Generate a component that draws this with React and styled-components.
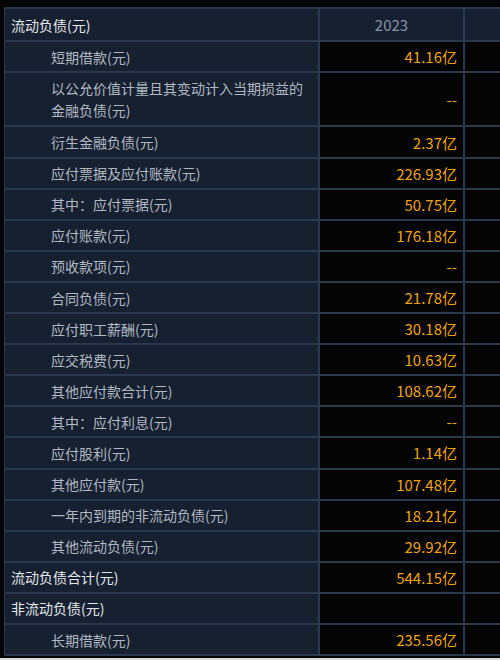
import React from 'react'
import styled, { createGlobalStyle } from 'styled-components'

const GlobalStyle = createGlobalStyle`
    html, body {
        margin: 0;
        padding: 0;
        background: #dcdcdc;
    }
    body {
        font-family: "Noto Sans CJK SC", "Noto Sans", sans-serif;
    }
`

const rows = [
    { name: '短期借款(元)', value: '41.16亿', level: 1 },
    { name: '以公允价值计量且其变动计入当期损益的金融负债(元)', value: '--', level: 1, tall: true },
    { name: '衍生金融负债(元)', value: '2.37亿', level: 1 },
    { name: '应付票据及应付账款(元)', value: '226.93亿', level: 1 },
    { name: '其中：应付票据(元)', value: '50.75亿', level: 1 },
    { name: '应付账款(元)', value: '176.18亿', level: 1 },
    { name: '预收款项(元)', value: '--', level: 1 },
    { name: '合同负债(元)', value: '21.78亿', level: 1 },
    { name: '应付职工薪酬(元)', value: '30.18亿', level: 1 },
    { name: '应交税费(元)', value: '10.63亿', level: 1 },
    { name: '其他应付款合计(元)', value: '108.62亿', level: 1 },
    { name: '其中：应付利息(元)', value: '--', level: 1 },
    { name: '应付股利(元)', value: '1.14亿', level: 1 },
    { name: '其他应付款(元)', value: '107.48亿', level: 1 },
    { name: '一年内到期的非流动负债(元)', value: '18.21亿', level: 1 },
    { name: '其他流动负债(元)', value: '29.92亿', level: 1 },
    { name: '流动负债合计(元)', value: '544.15亿', level: 0 },
    { name: '非流动负债(元)', value: '', level: 0 },
    { name: '长期借款(元)', value: '235.56亿', level: 1 },
]

export default function App() {
    return (
        <>
            <GlobalStyle />
            <Frame>
                <Grid>
                    <HeadLabel>流动负债(元)</HeadLabel>
                    <YearCell>2023</YearCell>
                    <HeadFill />
                    {rows.map((r, i) => (
                        <React.Fragment key={i}>
                            <Label level={r.level} tall={r.tall}>{r.name}</Label>
                            <Value tall={r.tall}>{r.value}</Value>
                            <Fill tall={r.tall} />
                        </React.Fragment>
                    ))}
                </Grid>
            </Frame>
        </>
    )
}

const Frame = styled.div`
    width: 500px;
    height: 658px;
    background: #050505;
    padding: 7px 0 0 4px;
    box-sizing: border-box;
    overflow: hidden;
`

const Grid = styled.div`
    display: grid;
    grid-template-columns: 313px 143px 1fr;
    column-gap: 2px;
    row-gap: 2px;
    padding: 2px 0 2px 1px;
    background: #2b394d;
    font-size: 14px;
`

const HeadLabel = styled.div`
    height: 31px;
    background: #172030;
    color: #e4e7ec;
    display: flex;
    align-items: center;
    padding-left: 6px;
`

const YearCell = styled.div`
    height: 31px;
    background: #172030;
    color: #8694aa;
    font-size: 15px;
    display: flex;
    align-items: center;
    justify-content: center;
`

const HeadFill = styled.div`
    background: #172030;
`

const Label = styled.div`
    height: ${({ tall }) => (tall ? '52.4px' : '29.1px')};
    background: #172030;
    color: ${({ level }) => (level === 0 ? '#e4e7ec' : '#b1b8c4')};
    display: flex;
    align-items: center;
    padding: 0 10px 0 ${({ level }) => (level === 0 ? '6px' : '46px')};
    line-height: 22px;
`

const Value = styled.div`
    height: ${({ tall }) => (tall ? '52.4px' : '29.1px')};
    background: #040404;
    color: #eea312;
    font-size: 15px;
    display: flex;
    align-items: center;
    justify-content: flex-end;
    padding-right: 6px;
`

const Fill = styled.div`
    background: #040404;
`
